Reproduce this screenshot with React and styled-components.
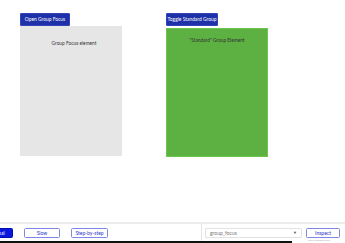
import React from 'react'
import styled, { createGlobalStyle } from 'styled-components'

const Global = createGlobalStyle`
  html, body { margin: 0; padding: 0; background: #fff; }
  body { font-family: Lato, 'Liberation Sans', sans-serif; overflow: hidden; }
  #root { width: 345px; height: 243px; }
`

const Page = styled.div`
  width: 345px;
  height: 243px;
  display: flex;
  flex-direction: column;
`

const Stage = styled.div`
  height: 222px;
  display: flex;
  gap: 44px;
  padding: 13px 0 0 20px;
  box-sizing: border-box;
`

const Group = styled.div`
  display: flex;
  flex-direction: column;
  align-items: flex-start;
  width: 102px;
`

const HeadButton = styled.button`
  height: 13px;
  width: ${p => p.$w}px;
  padding: 0;
  border: 1px solid #3344bb;
  border-radius: 1px;
  background: #1f31a8;
  color: #fff;
  font-family: Lato, 'Liberation Sans', sans-serif;
  font-size: 4.9px;
  line-height: 11px;
  text-align: center;
  white-space: nowrap;
  overflow: hidden;
`

const Panel = styled.div`
  width: 102px;
  box-sizing: border-box;
  margin-top: ${p => p.$gap}px;
  height: ${p => p.$h}px;
  background: ${p => p.$bg};
  border: ${p => (p.$border ? `1px solid ${p.$border}` : 'none')};
  padding-top: ${p => p.$pt}px;
  padding-left: ${p => p.$pl || 0}px;
  text-align: center;
  font-size: 4.8px;
  color: #333;
`

const Bar = styled.div`
  flex: 1;
  display: flex;
  align-items: center;
  border-top: 2px solid #ececec;
  box-sizing: border-box;
  height: 19px;
`

const Controls = styled.div`
  display: flex;
  align-items: center;
  gap: 11px;
  margin-left: -20px;
  width: 221px;
  height: 100%;
  border-right: 1px solid #e4e4e4;
`

const RunButton = styled.button`
  display: block;
  height: 10px;
  width: ${p => p.$w}px;
  padding: 0;
  border-radius: 1.5px;
  border: 1px solid ${p => (p.$active ? '#0010b0' : '#7e86e8')};
  background: ${p => (p.$active ? '#0a18dc' : '#fff')};
  color: ${p => (p.$active ? '#fff' : '#2a35c8')};
  font-family: Lato, 'Liberation Sans', sans-serif;
  font-size: 5px;
  line-height: 8px;
  text-align: center;
`

const Inspector = styled.div`
  display: flex;
  align-items: center;
  gap: 4px;
  padding-left: 3px;
`

const Select = styled.div`
  width: 97px;
  height: 10px;
  box-sizing: border-box;
  border: 1px solid #e2e2e2;
  border-radius: 1px;
  display: flex;
  align-items: center;
  justify-content: space-between;
  padding: 0 4px;
  font-size: 5px;
  color: #777;
`

const Caret = styled.span`
  font-size: 4px;
  color: #555;
`

const InspectWrap = styled.div`
  position: relative;
  display: flex;
  height: 10px;
`

const Hint = styled.span`
  position: absolute;
  left: 2px;
  top: 11px;
  font-size: 2.4px;
  line-height: 3px;
  color: #aaa;
  white-space: nowrap;
`

const Footer = styled.div`
  height: 2px;
  display: flex;
`

const Strip = styled.div`
  width: 292px;
  background: #111;
`

export default function App() {
  return (
    <Page>
      <Global />
      <Stage>
        <Group>
          <HeadButton $w={50}>Open Group Focus</HeadButton>
          <Panel $gap={0} $h={130} $bg="#e6e6e6" $pt={14} $pl={6}>Group Focus element</Panel>
        </Group>
        <Group>
          <HeadButton $w={52}>Toggle Standard Group</HeadButton>
          <Panel $gap={2} $h={129} $bg="#5cb142" $border="#6cc64e" $pt={8}>
            "Standard" Group Element
          </Panel>
        </Group>
      </Stage>
      <Bar>
        <Controls>
          <RunButton $w={33} $active>Normal</RunButton>
          <RunButton $w={36}>Slow</RunButton>
          <RunButton $w={37}>Step-by-step</RunButton>
        </Controls>
        <Inspector>
          <Select>
            group_focus
            <Caret>▼</Caret>
          </Select>
          <InspectWrap>
            <RunButton $w={34}>Inspect</RunButton>
            <Hint>Show inspector scale</Hint>
          </InspectWrap>
        </Inspector>
      </Bar>
      <Footer>
        <Strip />
      </Footer>
    </Page>
  )
}
